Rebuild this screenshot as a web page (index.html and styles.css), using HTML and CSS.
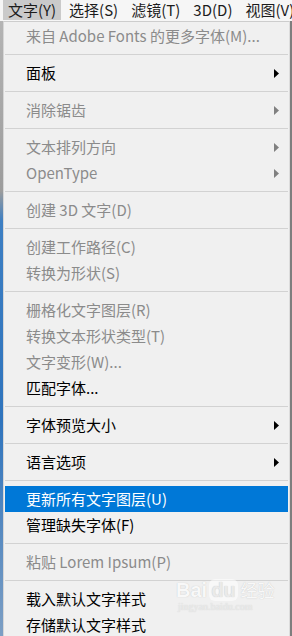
FILE: index.html
```html
<!DOCTYPE html>
<html lang="zh-CN">
<head>
<meta charset="utf-8">
<title>文字菜单</title>
<link rel="stylesheet" href="styles.css">
</head>
<body>
<div class="menubar">
  <div class="top active">文字(Y)</div>
  <div class="top">选择(S)</div>
  <div class="top">滤镜(T)</div>
  <div class="top">3D(D)</div>
  <div class="top">视图(V)</div>
</div>
<div class="wrap">
  <div class="left-strip"></div>
  <div class="panel">
    <div class="item disabled"><span>来自 Adobe Fonts 的更多字体(M)...</span></div>
    <div class="sep"></div>
    <div class="item"><span>面板</span><svg class="arrow" width="5" height="9" viewBox="0 0 5 9"><polygon points="0,0 5,4.5 0,9"/></svg></div>
    <div class="sep"></div>
    <div class="item disabled"><span>消除锯齿</span><svg class="arrow" width="5" height="9" viewBox="0 0 5 9"><polygon points="0,0 5,4.5 0,9"/></svg></div>
    <div class="sep"></div>
    <div class="item disabled"><span>文本排列方向</span><svg class="arrow" width="5" height="9" viewBox="0 0 5 9"><polygon points="0,0 5,4.5 0,9"/></svg></div>
    <div class="item disabled"><span>OpenType</span><svg class="arrow" width="5" height="9" viewBox="0 0 5 9"><polygon points="0,0 5,4.5 0,9"/></svg></div>
    <div class="sep"></div>
    <div class="item disabled"><span>创建 3D 文字(D)</span></div>
    <div class="sep"></div>
    <div class="item disabled"><span>创建工作路径(C)</span></div>
    <div class="item disabled"><span>转换为形状(S)</span></div>
    <div class="sep"></div>
    <div class="item disabled"><span>栅格化文字图层(R)</span></div>
    <div class="item disabled"><span>转换文本形状类型(T)</span></div>
    <div class="item disabled"><span>文字变形(W)...</span></div>
    <div class="item"><span>匹配字体...</span></div>
    <div class="sep"></div>
    <div class="item"><span>字体预览大小</span><svg class="arrow" width="5" height="9" viewBox="0 0 5 9"><polygon points="0,0 5,4.5 0,9"/></svg></div>
    <div class="sep"></div>
    <div class="item"><span>语言选项</span><svg class="arrow" width="5" height="9" viewBox="0 0 5 9"><polygon points="0,0 5,4.5 0,9"/></svg></div>
    <div class="sep"></div>
    <div class="item selected"><span>更新所有文字图层(U)</span></div>
    <div class="item"><span>管理缺失字体(F)</span></div>
    <div class="sep"></div>
    <div class="item disabled"><span>粘贴 Lorem Ipsum(P)</span></div>
    <div class="sep"></div>
    <div class="item"><span>载入默认文字样式</span></div>
    <div class="item"><span>存储默认文字样式</span></div>
  </div>
  <div class="right-strip"></div>
  <div class="watermark">
    <div class="wm-logo"><span class="wm-bai">Bai</span><span class="wm-du">du</span><span class="wm-jy">经验</span></div>
    <div class="wm-url">jingyan.baidu.com</div>
  </div>
</div>
</body>
</html>
```
FILE: styles.css
```css
html, body {
  margin: 0;
  padding: 0;
}
body {
  width: 292px;
  height: 636px;
  overflow: hidden;
  background: #f0f0f0;
  font-family: "Noto Sans CJK SC", "Noto Sans", sans-serif;
  font-size: 15px;
}
.menubar {
  display: flex;
  gap: 3px;
  height: 21px;
  padding-left: 3px;
  background: #f6f6f6;
  color: #1c1c1c;
  white-space: nowrap;
  overflow: hidden;
}
.top {
  padding: 0 5px;
  height: 20px;
  line-height: 20px;
}
.top.active {
  background: #cacaca;
}
.wrap {
  position: relative;
  display: flex;
  height: 615px;
}
.left-strip {
  width: 3px;
  background: linear-gradient(#b4b4b4 0, #9c9c9c 170px, #3d7fc3 200px, #2f74bd 400px, #7d9fc4 615px);
}
.panel {
  width: 283px;
  padding: 1px 1px 0 1px;
  border-top: 1px solid #cdcdcd;
  border-left: 1px solid #d6d6d6;
  border-right: 1px solid #dcdcdc;
  background: #f0f0f0;
}
.right-strip {
  width: 2px;
  background: #7e7e7e;
}
.item {
  display: flex;
  align-items: center;
  justify-content: space-between;
  height: 26px;
  line-height: 26px;
  padding: 0 9px 0 21px;
  color: #000;
  white-space: nowrap;
}
.item .arrow {
  fill: #000;
}
.item.disabled {
  color: #8b8b8b;
}
.item.disabled .arrow {
  fill: #808080;
}
.item.selected {
  background: #0078d7;
  color: #fff;
}
.sep {
  height: 1px;
  margin: 5px 0;
  background: #d2d2d2;
}
.watermark {
  position: absolute;
  left: 176px;
  top: 558px;
  opacity: 0.55;
  color: #fff;
  pointer-events: none;
}
.wm-logo {
  display: flex;
  align-items: center;
  font-family: "Liberation Sans", sans-serif;
  font-weight: bold;
  font-size: 20px;
  line-height: 22px;
  text-shadow: 0 0 1px #9a9a9a;
}
.wm-du {
  background: #fff;
  color: #e6e6e6;
  border-radius: 6px;
  padding: 0 2px;
  margin-left: 2px;
}
.wm-jy {
  font-family: "Noto Sans CJK SC", sans-serif;
  font-weight: normal;
  font-size: 17px;
  margin-left: 3px;
}
.wm-url {
  font-family: "Liberation Serif", serif;
  font-size: 10px;
  line-height: 12px;
  color: #e8e8e8;
  margin-left: 2px;
  text-shadow: 0 0 1px #b0b0b0;
}
```
